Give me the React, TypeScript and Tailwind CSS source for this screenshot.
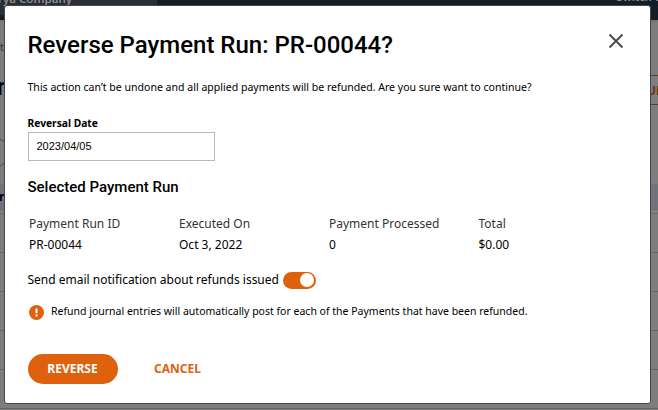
const columns = [
  { label: "Payment Run ID", value: "PR-00044" },
  { label: "Executed On", value: "Oct 3, 2022" },
  { label: "Payment Processed", value: "0" },
  { label: "Total", value: "$0.00" },
];

function PageBehind() {
  return (
    <div className="flex h-full flex-col bg-[#7d7d7d]">
      <header className="flex h-5 shrink-0 justify-between bg-[#151d26] text-[#8b8d90] shadow-sm">
        <div className="h-[15px] w-[157px] overflow-hidden rounded-br bg-[#2a2e36]">
          <p className="-mt-[9px] -ml-[2px] text-[11.5px] leading-4 font-semibold whitespace-nowrap">rya Company</p>
        </div>
        <p className="-mt-[11px] mr-[-8px] h-4 text-[11px] leading-4 font-semibold whitespace-nowrap">Switch to</p>
      </header>
      <div className="flex h-[164px] shrink-0 justify-between overflow-hidden">
        <div className="w-[5px] overflow-hidden">
          <p className="mt-[19px] text-[11px] leading-4 text-[#333]">t</p>
          <p className="mt-[14px] -ml-[3px] h-[40px] font-[Roboto,sans-serif] text-[24px] leading-9 font-medium text-black">r</p>
          <div className="mt-[29px] -ml-[24px] h-[29px] w-[34px] rounded-full border border-[#70401e]" />
        </div>
        <div className="w-2 overflow-hidden">
          <div className="mt-[55px] h-[30px] w-5 border-y border-[#713408] text-[12px] leading-[29px] font-bold text-[#713408]">
            <span className="-ml-[3px]">UN</span>
          </div>
        </div>
      </div>
      <div className="h-[25px] shrink-0 bg-[#70737b]">
        <p className="-ml-px text-[12px] leading-[25px] font-bold text-black">r</p>
      </div>
      <div className="h-[5px] shrink-0 border-y border-[#6d6d6d]" />
      {[0, 1, 2, 3, 4].map((row) => (
        <div key={row} className="h-[39px] shrink-0 border-b border-[#656565]" />
      ))}
    </div>
  );
}

function ReverseDialog() {
  return (
    <section
      role="dialog"
      aria-labelledby="dialog-title"
      className="absolute top-[5px] left-1 flex h-[399px] w-[647px] flex-col rounded-[3px] border border-[#45464b] bg-white px-[22.5px] text-black"
    >
      <div className="mt-[23px] flex h-8 items-center justify-between">
        <h1 id="dialog-title" className="font-[Roboto,sans-serif] text-[24px] leading-8 font-medium">
          Reverse Payment Run: PR-00044?
        </h1>
        <button aria-label="Close" className="-mt-[9px] mr-[4px]">
          <svg width="16" height="16" viewBox="0 0 16 16" stroke="#48484c" strokeWidth="1.9">
            <path d="M1.5 1.5 14.5 14.5M14.5 1.5 1.5 14.5" />
          </svg>
        </button>
      </div>

      <p className="mt-[18px] text-[10.56px] leading-4">
        This action can’t be undone and all applied payments will be refunded. Are you sure want to continue?
      </p>

      <label htmlFor="reversal-date" className="mt-5 text-[10.25px] leading-4 font-bold">
        Reversal Date
      </label>
      <input
        id="reversal-date"
        defaultValue="2023/04/05"
        className="mt-px h-[29px] w-[187px] border border-[#b9b9b9] px-[8px] pb-px font-['Liberation_Sans',sans-serif] text-[11px]"
      />

      <h2 className="mt-4 font-[Roboto,sans-serif] text-[15px] leading-5 font-medium">Selected Payment Run</h2>

      <dl className="mt-4 ml-[1.5px] grid grid-cols-[150px_150px_149.5px_1fr]">
        {columns.map((column) => (
          <div key={column.label} className="text-[12px] whitespace-nowrap">
            <dt className="leading-[21px] text-[#333]">{column.label}</dt>
            <dd className="leading-[21px]">{column.value}</dd>
          </div>
        ))}
      </dl>

      <div className="mt-[15px] flex h-5 items-center gap-1">
        <span className="text-[12px] leading-5">Send email notification about refunds issued</span>
        <button role="switch" aria-checked="true" className="flex h-[17px] w-[33px] items-center justify-end rounded-full bg-[#df610e] px-[2px]">
          <span className="size-[14px] rounded-full bg-white" />
        </button>
      </div>

      <div className="mt-[13px] ml-[1.5px] flex h-4 items-center gap-[7px]">
        <svg width="15" height="15" viewBox="0 0 15 15" className="mt-[3px]">
          <circle cx="7.5" cy="7.5" r="7.5" fill="#df610e" />
          <path d="M7.5 3.4v4.8M7.5 9.6v1.8" stroke="#fff" strokeWidth="1.9" />
        </svg>
        <p className="text-[10.5px] leading-4">
          Refund journal entries will automatically post for each of the Payments that have been refunded.
        </p>
      </div>

      <div className="mt-[35px] flex h-[30px] items-center gap-[36.5px] text-[12px] font-bold">
        <button className="h-[30px] w-[90px] rounded-full bg-[#df610e] text-white">REVERSE</button>
        <button className="text-[#df610e]">CANCEL</button>
      </div>
    </section>
  );
}

export default function App() {
  return (
    <main className="relative h-[410px] w-[658px] overflow-hidden font-['Noto_Sans',sans-serif]">
      <PageBehind />
      <ReverseDialog />
    </main>
  );
}
